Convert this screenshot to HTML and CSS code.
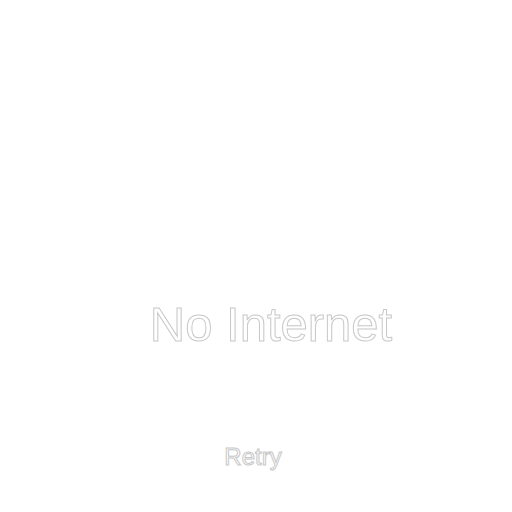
FILE: index.html
```html
<!DOCTYPE html>
<html>
<head>
<meta charset="utf-8">
<link rel="stylesheet" href="styles.css">
</head>
<body>
<main class="screen">
  <h1 class="title">No Internet</h1>
  <div class="retry" role="button">Retry</div>
</main>
</body>
</html>
```
FILE: styles.css
```css
html, body {
  margin: 0;
  padding: 0;
  background: #fff;
  width: 512px;
  height: 512px;
}
.screen {
  display: flex;
  flex-direction: column;
  align-items: center;
  padding-top: 296px;
  padding-left: 30px;
  font-family: "Liberation Sans", Arial, sans-serif;
}
.title {
  margin: 0;
  font-size: 49px;
  font-weight: 400;
  line-height: 56px;
  color: #fff;
  -webkit-text-stroke: 1px #c8c8c8;
}
.retry {
  margin-top: 91px;
  margin-left: -36px;
  font-size: 24px;
  font-weight: 400;
  line-height: 28px;
  color: #fff;
  -webkit-text-stroke: 1px #c8c8c8;
}
```
